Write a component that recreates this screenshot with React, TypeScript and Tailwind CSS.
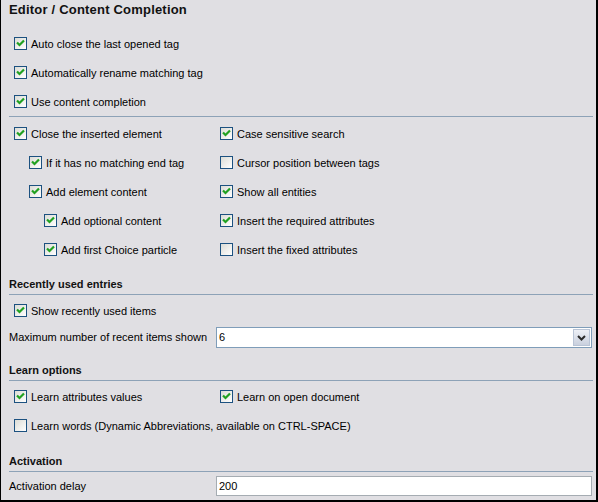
import React from "react";

const FONT = { fontFamily: '"Liberation Sans", Arial, sans-serif' };

function Check({ on }: { on: boolean }) {
  return (
    <span className="w-[13px] h-[13px] shrink-0 border border-[#1c5180] bg-gradient-to-br from-[#dcdcd6] to-white flex items-center justify-center">
      {on && (
        <svg width="9" height="9" viewBox="0 0 9 9">
          <path d="M1 3.5 L3.5 6 L8 1.5" fill="none" stroke="#21a121" strokeWidth="2.2" />
        </svg>
      )}
    </span>
  );
}

function Box({ label, on, indent = 0 }: { label: string; on: boolean; indent?: number }) {
  const pad = ["pl-[5px]", "pl-[20px]", "pl-[35px]"][indent];
  return (
    <div className={`h-[29px] flex items-center gap-[4px] ${pad}`}>
      <Check on={on} />
      <span className="text-[11px] leading-[14px] text-black whitespace-nowrap">{label}</span>
    </div>
  );
}

function Pair({ left, right }: { left: React.ReactNode; right: React.ReactNode }) {
  return (
    <div className="flex">
      <div className="w-[206px] shrink-0">{left}</div>
      <div className="flex-1">{right}</div>
    </div>
  );
}

function Header({ title, h }: { title: string; h: string }) {
  return (
    <div className={`${h} flex flex-col justify-end`}>
      <div className="text-[11px] leading-[16px] font-bold text-[#111]">{title}</div>
      <div className="h-[2px]" />
      <div className="h-px bg-[#8da2b7]" />
    </div>
  );
}

export default function App() {
  return (
    <div style={FONT} className="w-[598px] h-[502px] bg-[#e0dfe3] border-l border-r-2 border-b-2 border-black pl-[8px] pr-[3px] overflow-hidden">
      <div className="h-[20px] flex items-center text-[13px] tracking-[0.2px] font-bold text-[#111]">Editor / Content Completion</div>
      <div className="h-[9px]" />
      <Box label="Auto close the last opened tag" on />
      <Box label="Automatically rename matching tag" on />
      <Box label="Use content completion" on />
      <div className="h-px bg-[#8da2b7]" />
      <div className="h-[2px]" />
      <Pair left={<Box label="Close the inserted element" on />} right={<Box label="Case sensitive search" on />} />
      <Pair left={<Box label="If it has no matching end tag" on indent={1} />} right={<Box label="Cursor position between tags" on={false} />} />
      <Pair left={<Box label="Add element content" on indent={1} />} right={<Box label="Show all entities" on />} />
      <Pair left={<Box label="Add optional content" on indent={2} />} right={<Box label="Insert the required attributes" on />} />
      <Pair left={<Box label="Add first Choice particle" on indent={2} />} right={<Box label="Insert the fixed attributes" on={false} />} />

      <Header title="Recently used entries" h="h-[31px]" />
      <div className="h-px" />
      <Box label="Show recently used items" on />
      <div className="h-[25px] flex items-center">
        <span className="w-[207px] text-[11px] text-black whitespace-nowrap">Maximum number of recent items shown</span>
        <div className="w-[376px] h-[21px] border border-[#7f9db9] bg-white flex items-center">
          <span className="flex-1 pl-[2px] text-[11px] text-black">6</span>
          <div className="w-[17px] h-[17px] mr-[1px] border border-[#b9c4d6] bg-gradient-to-b from-[#eef0f6] to-[#c9d0de] flex items-center justify-center">
            <svg width="9" height="6" viewBox="0 0 9 6">
              <path d="M1 1 L4.5 4.5 L8 1" fill="none" stroke="#2b2b2b" strokeWidth="2" />
            </svg>
          </div>
        </div>
      </div>

      <Header title="Learn options" h="h-[31px]" />
      <div className="h-px" />
      <Pair left={<Box label="Learn attributes values" on />} right={<Box label="Learn on open document" on />} />
      <Box label="Learn words (Dynamic Abbreviations, available on CTRL-SPACE)" on={false} />

      <Header title="Activation" h="h-[32px]" />
      <div className="h-[28px] flex items-center">
        <span className="w-[207px] text-[11px] text-black">Activation delay</span>
        <div className="w-[376px] h-[20px] border border-[#a5acb2] bg-white flex items-center pl-[2px] text-[11px] text-black">200</div>
      </div>
    </div>
  );
}
